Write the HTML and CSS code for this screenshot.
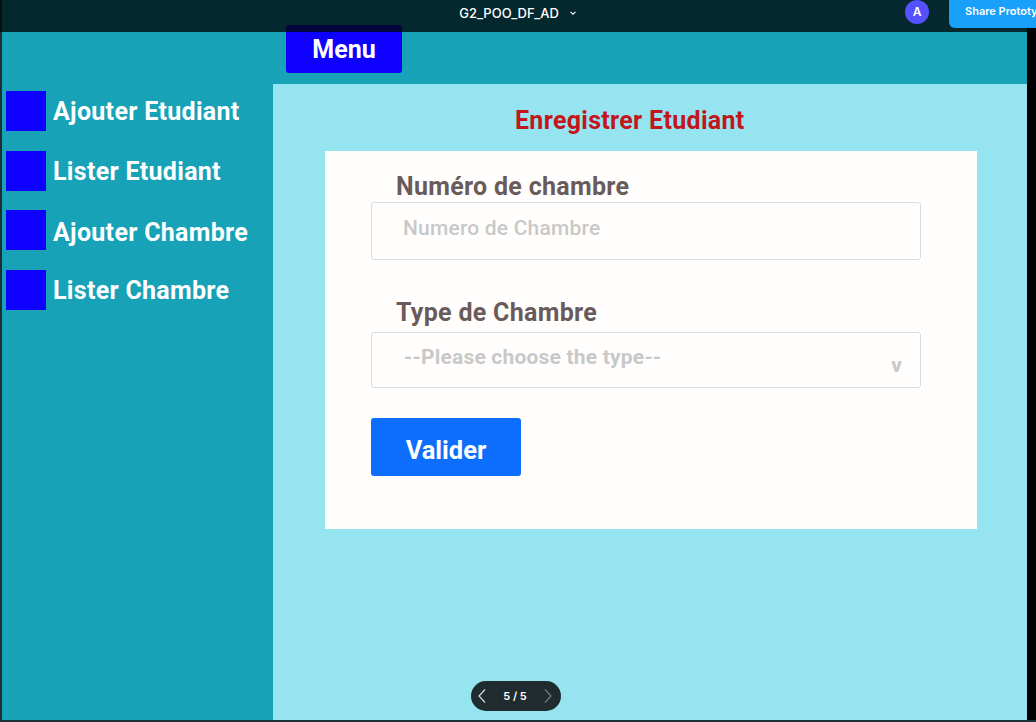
FILE: index.html
```html
<!DOCTYPE html>
<html lang="fr">
<head>
<meta charset="utf-8">
<title>G2_POO_DF_AD</title>
<link rel="stylesheet" href="styles.css">
</head>
<body>
<div class="stage">
  <div class="frame">
    <div class="header">
      <button class="menu-btn">Menu</button>
    </div>
    <div class="content">
      <nav class="sidebar">
        <div class="nav-item"><span class="nav-icon"></span><span class="nav-text">Ajouter Etudiant</span></div>
        <div class="nav-item"><span class="nav-icon"></span><span class="nav-text">Lister Etudiant</span></div>
        <div class="nav-item"><span class="nav-icon"></span><span class="nav-text nav-text-low">Ajouter Chambre</span></div>
        <div class="nav-item"><span class="nav-icon"></span><span class="nav-text">Lister Chambre</span></div>
      </nav>
      <main class="main">
        <h1 class="page-title">Enregistrer Etudiant</h1>
        <form class="card">
          <label class="field-label label-first">Numéro de chambre</label>
          <input class="field-input" type="text" placeholder="Numero de Chambre">
          <label class="field-label label-second">Type de Chambre</label>
          <div class="field-select">
            <span class="select-text">--Please choose the type--</span>
            <span class="select-arrow">v</span>
          </div>
          <button type="button" class="submit-btn">Valider</button>
        </form>
      </main>
    </div>
  </div>
  <div class="right-edge"></div>
</div>

<header class="topbar">
  <div class="topbar-left"></div>
  <div class="topbar-title">
    <span class="file-name">G2_POO_DF_AD</span>
    <svg class="title-chevron" width="8" height="6" viewBox="0 0 8 6"><path d="M1.5 1.8 L4 4.2 L6.5 1.8" fill="none" stroke="#ffffff" stroke-width="1.1"/></svg>
  </div>
  <div class="topbar-right">
    <span class="avatar">A</span>
    <span class="share-btn">Share Prototype</span>
  </div>
</header>

<div class="pager">
  <svg class="pager-arrow" width="10" height="16" viewBox="0 0 10 16"><path d="M8 1.5 L2 8 L8 14.5" fill="none" stroke="#d3d9db" stroke-width="1.2"/></svg>
  <span class="pager-text">5 / 5</span>
  <svg class="pager-arrow" width="10" height="16" viewBox="0 0 10 16"><path d="M2 1.5 L8 8 L2 14.5" fill="none" stroke="#6f7c80" stroke-width="1.2"/></svg>
</div>
</body>
</html>
```

FILE: styles.css
```css
* { box-sizing: border-box; }

html, body {
  margin: 0;
  padding: 0;
  width: 1036px;
  height: 722px;
  overflow: hidden;
}

body {
  background: #1b3135;
  font-family: Roboto, "Liberation Sans", sans-serif;
  position: relative;
}

.stage {
  display: flex;
  height: 720px;
}

.frame {
  width: 1025px;
  margin-left: 2px;
  background: #17a2b8;
  display: flex;
  flex-direction: column;
}

.right-edge {
  flex: 1;
  background: #000000;
}

.header {
  height: 84px;
  padding: 25px 0 0 284px;
}

.menu-btn {
  width: 116px;
  height: 48px;
  border: none;
  border-radius: 3px;
  background: #0d00ff;
  color: #ffffff;
  font-family: Roboto, "Liberation Sans", sans-serif;
  font-weight: 700;
  font-size: 25px;
  line-height: 46px;
  padding: 2px 0 0 0;
}

.content {
  flex: 1;
  display: flex;
}

.sidebar {
  width: 271px;
  padding: 7px 0 0 4px;
  display: flex;
  flex-direction: column;
  gap: 19.7px;
}

.nav-item {
  display: flex;
  align-items: center;
  gap: 7px;
  height: 40px;
}

.nav-icon {
  width: 40px;
  height: 40px;
  background: #0d00ff;
  flex: none;
}

.nav-text {
  color: #ffffff;
  font-weight: 700;
  font-size: 25px;
  letter-spacing: 0.3px;
  line-height: 28px;
  padding-top: 2px;
}

.nav-text-low {
  padding-top: 6px;
}

.main {
  flex: 1;
  background: #96e4f0;
  padding: 23px 50px 0 52px;
}

.page-title {
  margin: 0 0 16px 190px;
  color: #c2161c;
  font-weight: 700;
  font-size: 25px;
  letter-spacing: 0.3px;
  line-height: 28px;
}

.card {
  background: #fffefd;
  padding: 22px 56px 53px 46px;
  display: flex;
  flex-direction: column;
  align-items: flex-start;
}

.field-label {
  color: #6a5b5b;
  font-weight: 700;
  font-size: 25px;
  letter-spacing: 0.3px;
  line-height: 28px;
  margin-left: 25px;
}

.label-first { margin-bottom: 1px; }
.label-second { margin-top: 39px; margin-bottom: 5px; }

.field-input {
  width: 550px;
  height: 58px;
  border: 1px solid #dcdcdc;
  border-radius: 3px;
  padding: 0 20px 6px 31px;
  font-family: Roboto, "Liberation Sans", sans-serif;
  font-size: 21px;
  letter-spacing: 0.2px;
  font-weight: 500;
  color: #555555;
  background: #fffefd;
  outline: none;
}

.field-input::placeholder {
  color: #c8c8c8;
  opacity: 1;
}

.field-select {
  width: 550px;
  height: 56px;
  border: 1px solid #dcdcdc;
  border-radius: 3px;
  padding: 12px 18px 0 32px;
  display: flex;
  justify-content: space-between;
  align-items: flex-start;
  font-size: 21px;
  letter-spacing: 0.2px;
  font-weight: 700;
  color: #c8c8c8;
}

.select-text {
  line-height: 24px;
}

.select-arrow {
  line-height: 24px;
  margin-top: 8px;
}

.submit-btn {
  margin-top: 30px;
  width: 150px;
  height: 58px;
  border: none;
  border-radius: 3px;
  background: #0d6efd;
  color: #ffffff;
  font-family: Roboto, "Liberation Sans", sans-serif;
  font-weight: 700;
  font-size: 25.5px;
  line-height: 52px;
  padding: 6px 0 0 0;
  text-align: center;
}

/* Figma prototype chrome */
.topbar {
  position: absolute;
  top: 0;
  left: 0;
  width: 1036px;
  height: 32px;
  background: rgba(1, 8, 10, 0.79);
  display: grid;
  grid-template-columns: 1fr auto 1fr;
  align-items: start;
  font-family: Inter, "Liberation Sans", sans-serif;
}

.topbar-title {
  display: flex;
  align-items: center;
  gap: 10px;
  height: 25px;
  padding-top: 1px;
}

.file-name {
  color: #ffffff;
  font-size: 13px;
  font-weight: 500;
  line-height: 24px;
}

.title-chevron { display: block; }

.topbar-right {
  display: flex;
  justify-content: flex-end;
  align-items: flex-start;
  gap: 20px;
  margin-right: -27px;
}

.avatar {
  width: 24px;
  height: 24px;
  border-radius: 50%;
  background: #5551ff;
  color: #ffffff;
  font-size: 12px;
  font-weight: 600;
  line-height: 24px;
  text-align: center;
  margin-top: 0;
}

.share-btn {
  margin-top: -6px;
  height: 34px;
  width: 114px;
  padding: 6px 0 0 16px;
  border-radius: 6px;
  background: #18a0fb;
  color: #ffffff;
  font-size: 11px;
  font-weight: 600;
  line-height: 22px;
  white-space: nowrap;
}

.pager {
  position: absolute;
  left: 471px;
  top: 681px;
  width: 90px;
  height: 30px;
  border-radius: 15px;
  background: #1f2b2e;
  display: flex;
  align-items: center;
  justify-content: space-between;
  padding: 0 8px 0 6px;
  font-family: Inter, "Liberation Sans", sans-serif;
}

.pager-arrow { display: block; }

.pager-text {
  color: #ffffff;
  font-size: 11px;
  font-weight: 600;
  line-height: 30px;
}
```
